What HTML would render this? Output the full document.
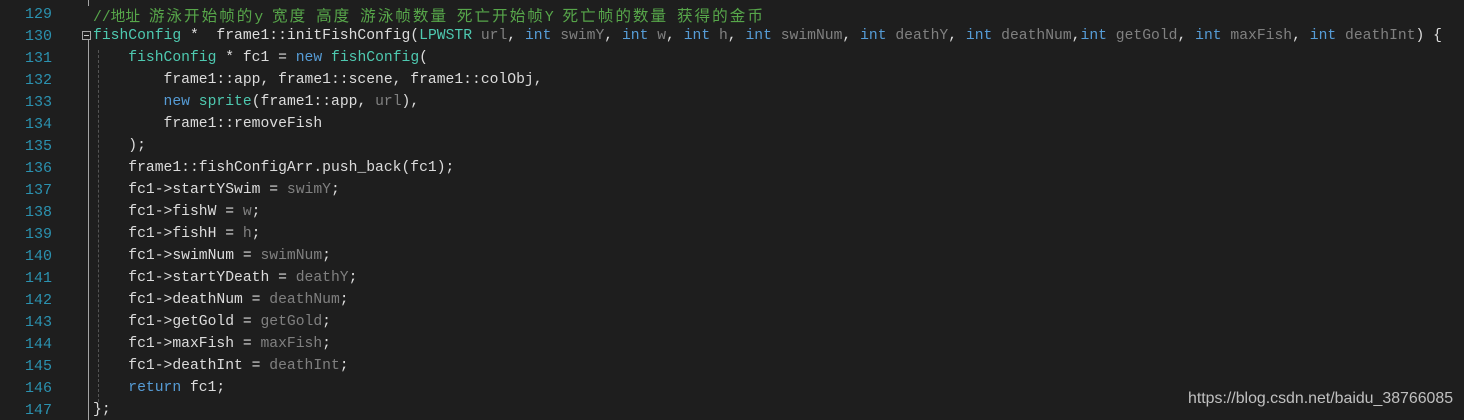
<!DOCTYPE html>
<html><head><meta charset="utf-8"><style>
body{margin:0;width:1464px;height:420px;background:#1e1e1e;overflow:hidden;position:relative;font-family:"Liberation Mono","Noto Sans CJK SC",monospace;font-size:14.7px;}
.ln{position:absolute;left:0;width:52px;text-align:right;color:#2b91af;font-size:15px;}
.c{position:absolute;left:93px;white-space:pre;color:#dcdcdc;}
.t{color:#4ec9b0}.k{color:#569cd6}.p{color:#808080}.m{color:#dadada}.cm{color:#57a64a}
.cj{font-family:"Noto Sans CJK SC",sans-serif;font-size:15.6px;letter-spacing:2px;line-height:1}
</style></head><body>
<div style="position:absolute;left:88px;top:40px;width:1px;height:380px;background:#a5a5a5"></div>
<div style="position:absolute;left:82px;top:31px;width:9px;height:9px;border:1px solid #a5a5a5;box-sizing:border-box;background:#1e1e1e"></div>
<div style="position:absolute;left:84px;top:35px;width:5px;height:1px;background:#c8c8c8"></div>
<div style="position:absolute;left:98px;top:50px;width:0;height:352px;border-left:1px dashed #555"></div>
<div style="position:absolute;left:88px;top:0;width:1px;height:6px;background:#a5a5a5"></div>
<div class="ln" style="top:6px">129</div><div class="c" style="top:5px"><span class="cm">//地址 <span class="cj">游泳开始帧的</span>y <span class="cj">宽度</span> <span class="cj">高度</span> <span class="cj">游泳帧数量</span> <span class="cj">死亡开始帧</span>Y <span class="cj">死亡帧的数量</span> <span class="cj">获得的金币</span></span></div>
<div class="ln" style="top:28px">130</div><div class="c" style="top:28px"><span class="t">fishConfig</span> *  frame1::initFishConfig(<span class="t">LPWSTR</span> <span class="p">url</span>, <span class="k">int</span> <span class="p">swimY</span>, <span class="k">int</span> <span class="p">w</span>, <span class="k">int</span> <span class="p">h</span>, <span class="k">int</span> <span class="p">swimNum</span>, <span class="k">int</span> <span class="p">deathY</span>, <span class="k">int</span> <span class="p">deathNum</span>,<span class="k">int</span> <span class="p">getGold</span>, <span class="k">int</span> <span class="p">maxFish</span>, <span class="k">int</span> <span class="p">deathInt</span>) {</div>
<div class="ln" style="top:50px">131</div><div class="c" style="top:50px">    <span class="t">fishConfig</span> * fc1 = <span class="k">new</span> <span class="t">fishConfig</span>(</div>
<div class="ln" style="top:72px">132</div><div class="c" style="top:72px">        frame1::app, frame1::scene, frame1::colObj,</div>
<div class="ln" style="top:94px">133</div><div class="c" style="top:94px">        <span class="k">new</span> <span class="t">sprite</span>(frame1::app, <span class="p">url</span>),</div>
<div class="ln" style="top:116px">134</div><div class="c" style="top:116px">        frame1::removeFish</div>
<div class="ln" style="top:138px">135</div><div class="c" style="top:138px">    );</div>
<div class="ln" style="top:160px">136</div><div class="c" style="top:160px">    frame1::fishConfigArr.push_back(fc1);</div>
<div class="ln" style="top:182px">137</div><div class="c" style="top:182px">    fc1-&gt;startYSwim = <span class="p">swimY</span>;</div>
<div class="ln" style="top:204px">138</div><div class="c" style="top:204px">    fc1-&gt;fishW = <span class="p">w</span>;</div>
<div class="ln" style="top:226px">139</div><div class="c" style="top:226px">    fc1-&gt;fishH = <span class="p">h</span>;</div>
<div class="ln" style="top:248px">140</div><div class="c" style="top:248px">    fc1-&gt;swimNum = <span class="p">swimNum</span>;</div>
<div class="ln" style="top:270px">141</div><div class="c" style="top:270px">    fc1-&gt;startYDeath = <span class="p">deathY</span>;</div>
<div class="ln" style="top:292px">142</div><div class="c" style="top:292px">    fc1-&gt;deathNum = <span class="p">deathNum</span>;</div>
<div class="ln" style="top:314px">143</div><div class="c" style="top:314px">    fc1-&gt;getGold = <span class="p">getGold</span>;</div>
<div class="ln" style="top:336px">144</div><div class="c" style="top:336px">    fc1-&gt;maxFish = <span class="p">maxFish</span>;</div>
<div class="ln" style="top:358px">145</div><div class="c" style="top:358px">    fc1-&gt;deathInt = <span class="p">deathInt</span>;</div>
<div class="ln" style="top:380px">146</div><div class="c" style="top:380px">    <span class="k">return</span> fc1;</div>
<div class="ln" style="top:402px">147</div><div class="c" style="top:402px">};</div>
<div style="position:absolute;left:1188px;top:390px;color:#c0c0c0;font-family:'Liberation Sans',sans-serif;font-size:15.9px">https://blog.csdn.net/baidu_38766085</div>
</body></html>
